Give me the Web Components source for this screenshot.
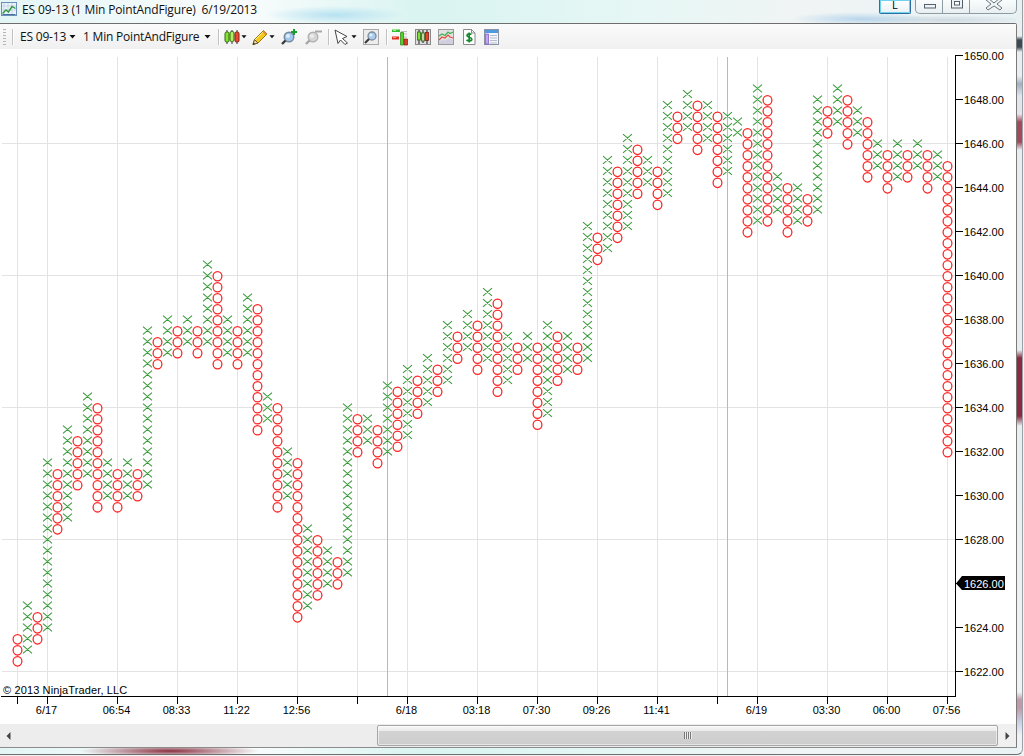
<!DOCTYPE html>
<html>
<head>
<meta charset="utf-8">
<title>ES 09-13 (1 Min PointAndFigure)</title>
<style>
    html, body { margin: 0; padding: 0; width: 1024px; height: 756px; overflow: hidden; background: #eef3f4; }
</style>
</head>
<body>
<nt-window>
    <nt-titlebar slot="title">ES 09-13 (1 Min PointAndFigure)&nbsp; 6/19/2013</nt-titlebar>
    <nt-toolbar>
        <tb-gripper></tb-gripper>
        <tb-sep style="margin-left:6px"></tb-sep>
        <tb-menu style="margin-left:7px;width:56px">ES 09-13</tb-menu>
        <tb-menu style="margin-left:7px;width:128px">1 Min PointAndFigure</tb-menu>
        <tb-sep style="margin-left:7px"></tb-sep>
        <tb-button icon="candles" arrow style="margin-left:5px"></tb-button>
        <tb-button icon="pencil" arrow style="margin-left:5px"></tb-button>
        <tb-button icon="zoomin" style="margin-left:6px"></tb-button>
        <tb-button icon="zoomout" style="margin-left:8px"></tb-button>
        <tb-sep style="margin-left:7px"></tb-sep>
        <tb-button icon="cursor" arrow style="margin-left:5px"></tb-button>
        <tb-button icon="finder" style="margin-left:6px"></tb-button>
        <tb-sep style="margin-left:7px"></tb-sep>
        <tb-button icon="orders" style="margin-left:5px"></tb-button>
        <tb-button icon="bars" style="margin-left:7px"></tb-button>
        <tb-button icon="lines" style="margin-left:7px"></tb-button>
        <tb-button icon="dollar" style="margin-left:7px"></tb-button>
        <tb-button icon="sheet" style="margin-left:7px"></tb-button>
    </nt-toolbar>
    <pf-chart></pf-chart>
    <nt-scrollbar></nt-scrollbar>
</nt-window>

<script>
"use strict";

class NtWindow extends HTMLElement {
    constructor() {
        super();
        this.attachShadow({ mode: 'open' }).innerHTML = `
            <style>
                :host { display: block; width: 1023px; height: 755px; }
                .frame {
                    box-sizing: border-box;
                    width: 100%;
                    height: 100%;
                    padding: 0 5px 6px 0;
                    display: flex;
                    flex-direction: column;
                    border-bottom: 1px solid #6f6f6f;
                    border-right: 1px solid #9aa0a4;
                    border-bottom-right-radius: 6px;
                    background:
                        linear-gradient(#e8f0f2 0, #e8f0f2 36px, #3a4a55 40px, #3a4a55 47px, #e8eef2 52px, #e8eef2 76px, #9fb0c0 84px, #dfe6ee 96px, #e8e4ea 114px, #a04a5c 122px, #a04a5c 142px, #e6eef0 150px, #e6eef0 350px, #8a2a40 358px, #8a2a40 416px, #e6f0f0 426px, #eef4f4 692px, #c09aa8 700px, #c09aa8 708px, #c8d0e8 722px, #eef2f6 735px) right top / 6px 100% no-repeat,
                        radial-gradient(90px 6px at 170px 751px, #8a3040, rgba(138,48,64,0)),
                        radial-gradient(70px 9px at 335px 15px, rgba(170,220,240,.8), rgba(170,220,240,0)),
                        radial-gradient(70px 7px at 860px 19px, rgba(150,195,230,.6), rgba(150,195,230,0)),
                        radial-gradient(90px 5px at 945px 20px, rgba(170,185,200,.45), rgba(170,185,200,0)),
                        linear-gradient(90deg, #e4f5f6 0, #f6fbfb 200px, #f8fcfc 250px, #d9f4f1 420px, #e6f7f5 640px, #f0f4f4 800px, #e9f3f6 1020px);
                }
                .client {
                    flex: 1;
                    display: flex;
                    flex-direction: column;
                    background: #fff;
                    border-top: 1px solid #6e6e6e;
                    border-right: 1px solid #7a7a7a;
                    border-bottom: 1px solid #8c8c8c;
                    border-top-right-radius: 2px;
                }
            </style>
            <div class="frame">
                <slot name="title"></slot>
                <div class="client"><slot></slot></div>
            </div>
        `;
    }
}
customElements.define('nt-window', NtWindow);

class NtTitlebar extends HTMLElement {
    constructor() {
        super();
        this.attachShadow({ mode: 'open' }).innerHTML = `
            <style>
                :host { display: flex; height: 23px; align-items: flex-start; font: 12px "Open Sans", sans-serif; color: #111; }
                .icon { width: 16px; height: 14px; margin: 2px 0 0 1px; flex: none; }
                .text { margin: 1px 0 0 5px; line-height: 17px; letter-spacing: -.15px; white-space: pre; flex: 1; text-shadow: 0 0 4px #fff; }
                .layout {
                    box-sizing: border-box; width: 32px; height: 14px; flex: none; margin-right: 4px; padding-top: 1px;
                    border: 1px solid #2a6f9f; border-top: 0; border-radius: 0 0 2px 2px;
                    background: linear-gradient(#fff, #e9f1f5);
                    box-shadow: inset 0 0 0 1px #6fd3ee;
                    font: 10px/10px "Liberation Sans", sans-serif; text-align: center; color: #000;
                }
                .caption {
                    box-sizing: border-box; width: 102px; height: 14px; flex: none; display: flex;
                    border: 1px solid #8d9ba3; border-top: 0; border-radius: 0 0 5px 5px;
                    background: linear-gradient(rgba(255,255,255,.75), rgba(232,238,240,.75));
                }
                .caption svg { display: block; border-right: 1px solid #8d9ba3; flex: none; }
                .caption svg:last-child { border-right: 0; flex: 1; }
            </style>
            <svg class="icon" viewBox="0 0 16 14">
                <rect x=".5" y=".5" width="15" height="13" fill="#eaf3fb" stroke="#6d8fb6"/>
                <path d="M3 1v12M7 1v12M11 1v12M1 4h14M1 8h14" stroke="#c6d5e6"/>
                <path d="M1.5 11.5 5 8l2.5 2L11 4.5l3.5 2" fill="none" stroke="#2f9a3a" stroke-width="1.4"/>
                <path d="M1.5 12.5h13" stroke="#4970a5"/>
            </svg>
            <span class="text"><slot></slot></span>
            <div class="layout">L</div>
            <div class="caption">
                <svg width="26" height="13"><rect x="8.5" y="4.5" width="11" height="3.5" fill="#eef3f5" stroke="#56606a"/></svg>
                <svg width="26" height="13"><rect x="8.5" y="-1.5" width="11" height="9.5" fill="#eef3f5" stroke="#56606a"/><rect x="11.5" y="1.5" width="5" height="3.5" fill="#fff" stroke="#56606a"/></svg>
                <svg width="48" height="13"><path d="M18 -2 24 3 30 -2 32 0 27 4 32 8 30 10 24 6 18 10 16 8 21 4 16 0Z" fill="#eef3f5" stroke="#6a747c"/></svg>
            </div>
        `;
    }
}
customElements.define('nt-titlebar', NtTitlebar);

class NtToolbar extends HTMLElement {
    constructor() {
        super();
        this.attachShadow({ mode: 'open' }).innerHTML = `
            <style>
                :host {
                    display: flex; align-items: center; flex: none; box-sizing: border-box;
                    height: 25px; padding-left: 3px;
                    background: linear-gradient(#fbfbfb, #f0f0f0);
                    font: 12px "Open Sans", sans-serif; color: #111;
                }
            </style>
            <slot></slot>
        `;
    }
}
customElements.define('nt-toolbar', NtToolbar);

class TbGripper extends HTMLElement {
    constructor() {
        super();
        this.attachShadow({ mode: 'open' }).innerHTML = `
            <style>
                :host {
                    display: block; width: 3px; height: 16px; flex: none;
                    background: repeating-linear-gradient(#b5b5b5 0 1px, #f4f4f4 1px 2px, transparent 2px 3px);
                }
            </style>
        `;
    }
}
customElements.define('tb-gripper', TbGripper);

class TbSep extends HTMLElement {
    constructor() {
        super();
        this.attachShadow({ mode: 'open' }).innerHTML = `
            <style>
                :host { display: block; width: 1px; height: 16px; flex: none; background: #c2c2c2; box-shadow: 1px 0 0 #fff; }
            </style>
        `;
    }
}
customElements.define('tb-sep', TbSep);

const ARROW = '<svg class="arrow" width="7" height="5" viewBox="0 0 7 5"><path d="M.5 1h6L3.500 4.500z" fill="#111"/></svg>';

class TbMenu extends HTMLElement {
    constructor() {
        super();
        this.attachShadow({ mode: 'open' }).innerHTML = `
            <style>
                :host { display: flex; align-items: center; justify-content: space-between; flex: none; white-space: nowrap; letter-spacing: -.2px; line-height: 17px; }
                .arrow { display: block; }
            </style>
            <span><slot></slot></span>${ARROW}
        `;
    }
}
customElements.define('tb-menu', TbMenu);

const ICONS = {
    candles: `<path d="M3 1v14M8 1v14M13 1v14" stroke="#333"/>
        <rect x="1" y="3" width="4" height="10" rx="1.500" fill="#86e02c" stroke="#2c6a18"/>
        <rect x="6" y="2.500" width="4" height="10" rx="1.500" fill="#b4ec5c" stroke="#2c6a18"/>
        <rect x="11" y="3" width="4" height="10" rx="1.500" fill="#ee4a30" stroke="#7c2014"/>`,
    pencil: `<path d="M1 15.500 2.500 10.500 11.500 1.500 15 5 6 14z" fill="#f4c81c" stroke="#9a7a10"/>
        <path d="M3 11 12 2" stroke="#fff28a"/>
        <path d="M1 15.500 2.500 10.500 6 14z" fill="#e8d6a8" stroke="#6a5a30"/>
        <path d="M.8 15.800 1.500 13.500 3 15z" fill="#222"/>
        <path d="M11.500 1.500 15 5 13.800 6.200 10.300 2.700z" fill="#e88a3a"/>`,
    zoomin: `<circle cx="8" cy="8" r="4.800" fill="#9fc6ee" stroke="#7a8a9a" stroke-width="1.400"/>
        <circle cx="7" cy="7" r="2" fill="#dcecfb"/>
        <path d="M4.500 11.500 1 15" stroke="#3a3a3a" stroke-width="2.400"/>
        <path d="M13 0v6M10 3h6" stroke="#15a02a" stroke-width="2"/>`,
    zoomout: `<circle cx="8" cy="8" r="4.800" fill="#d6d6d6" stroke="#b2b2b2" stroke-width="1.400"/>
        <circle cx="7" cy="7" r="2" fill="#ececec"/>
        <path d="M4.500 11.500 1 15" stroke="#a5a5a5" stroke-width="2.400"/>
        <path d="M10 2.500h7" stroke="#a9a9a9" stroke-width="2"/>`,
    cursor: `<path d="M1 1 13 7.500 8.500 9.500 13.500 14 11 15.500 6.500 11 4 14.500z" fill="#fff" stroke="#444" stroke-linejoin="round"/>`,
    finder: `<rect x=".5" y=".5" width="15" height="15" fill="#ececec" stroke="#a8a8a8"/>
        <circle cx="9" cy="7" r="4" fill="#a9cdf0" stroke="#7d8c9c" stroke-width="1.300"/>
        <circle cx="8" cy="6" r="1.600" fill="#e0eefb"/>
        <path d="M6 10 2 14" stroke="#3a3a3a" stroke-width="2.200"/>`,
    orders: `<path d="M9 2.500h6M10 5h5M10 8h5M11 11h4M11 14h4" stroke="#bdbdbd"/>
        <path d="M0 .5h8v2.500H0z" fill="#2fbf2f"/><path d="M1 .5h3V2H1z" fill="#a4ee80"/>
        <path d="M0 7.500h7v3H0z" fill="#e33020"/><path d="M1 8h3v1H1z" fill="#ff9a8a"/>
        <path d="M8.500 3.500h3V16h-3z" fill="#56d028" stroke="#2a8018" stroke-width=".7"/>
        <path d="M12 10h3.500v6H12z" fill="#d84028" stroke="#7a2014" stroke-width=".7"/>`,
    bars: `<rect x=".5" y=".5" width="15" height="15" fill="#dcdcdc" stroke="#8a8a8a"/>
        <path d="M4 1v14M8 1v13M12 1v14" stroke="#222"/>
        <rect x="2.500" y="3" width="3" height="8" fill="#7ce030" stroke="#2a6a18" stroke-width=".8"/>
        <rect x="6.500" y="4" width="3" height="8" fill="#c8d6a0" stroke="#3a5a20" stroke-width=".8"/>
        <rect x="10.500" y="3.500" width="3" height="8" fill="#ea4428" stroke="#7c2014" stroke-width=".8"/>`,
    lines: `<rect x=".5" y=".5" width="15" height="15" fill="#e2e2e2" stroke="#9a9a9a"/>
        <path d="M1 7 4 5l3 1.500L10 3l2 1.500L15 3" fill="none" stroke="#38b050" stroke-width="1.200"/>
        <path d="M1 11l3-3 3 1 3-3 2 2 3 1" fill="none" stroke="#e84a3a" stroke-width="1.100"/>
        <path d="M1 12.500l3-1.500 3 .5 4-2 4 1.500V15H1z" fill="#cfcfe0"/>`,
    dollar: `<path d="M2.500.5h8L14 4v11.500H2.500z" fill="#fff" stroke="#8a8a8a"/>
        <path d="M10.500.5V4H14" fill="none" stroke="#8a8a8a"/>
        <path d="M10.500 5.500C9.500 4.500 6 4.500 6 6.500S10.800 8 10.800 10.200 7 12.200 5.500 11M8.200 3.500v10" fill="none" stroke="#18882c" stroke-width="1.700"/>`,
    sheet: `<rect x=".5" y=".5" width="14" height="15" fill="#f4f6fa" stroke="#8a92a8"/>
        <rect x="1" y="1" width="13" height="3" fill="#4d9bdd"/>
        <rect x="1.500" y="5" width="3" height="10" fill="#c4a6ee" stroke="#7a52c0" stroke-width=".7"/>
        <path d="M6 6.500h7M6 9h7M6 11.500h7M6 14h7" stroke="#b5bccb"/>`
};

class TbButton extends HTMLElement {
    constructor() {
        super();
        this.attachShadow({ mode: 'open' });
    }
    connectedCallback() {
        const hasArrow = this.hasAttribute('arrow');
        this.shadowRoot.innerHTML = `
            <style>
                :host { display: flex; align-items: center; flex: none; height: 16px; }
                svg { display: block; overflow: visible; }
                .arrow { margin: 0 0 0 1px; }
            </style>
            <svg width="16" height="16" viewBox="0 0 16 16">${ICONS[this.getAttribute('icon')]}</svg>
            ${hasArrow ? ARROW.replace('width="7"', 'width="6"') : ''}
        `;
    }
}
customElements.define('tb-button', TbButton);

// one entry per column, x = 17 + 10 * index: type, high, low
const COLUMNS = `O1623.5-1622.5 X1625-1623 O1624.5-1623.5 X1631.5-1624 O1631-1628.5 X1633-1629 O1632.5-1630.5
X1634.5-1631 O1634-1629.5 X1631.5-1630 O1631-1629.5 X1631.5-1630 O1631-1630 X1637.5-1630.5 O1637-1636
X1638-1636.5 O1637.5-1636.5 X1638-1637 O1637.5-1636.5 X1640.5-1637 O1640-1636 X1638-1636.5 O1637.5-1636
X1639-1636.5 O1638.5-1633 X1634.5-1633.5 O1634-1629.5 X1632-1630 O1631.5-1624.5 X1628.5-1625 O1628-1625.5
X1627.5-1626 O1627-1626 X1634-1626.5 O1633.5-1632 X1633.5-1632.5 O1633-1631.5 X1635-1632 O1634.75-1632.25
X1635.75-1632.75 O1635.25-1633.75 X1636.25-1634.25 O1635.75-1634.75 X1637.75-1635.25 O1637.25-1636.25
X1638.25-1636.75 O1637.75-1635.75 X1639.25-1636.25 O1638.75-1634.75 X1637.25-1635.25 O1636.75-1635.75
X1637.25-1636.25 O1636.75-1633.25 X1637.75-1633.75 O1637.25-1635.25 X1637.25-1635.75 O1636.75-1635.75
X1642.25-1636.25 O1641.75-1640.75 X1645.25-1641.25 O1644.75-1641.75 X1646.25-1642.25 O1645.75-1643.75
X1645.25-1644.25 O1644.75-1643.25 X1647.75-1643.75 O1647.25-1646.25 X1648.25-1646.75 O1647.75-1645.75
X1647.75-1646.25 O1647.25-1644.25 X1647.25-1644.75 X1647-1646.5 O1646.5-1642 X1648.5-1642.5 O1648-1642.5
X1644.5-1643 O1644-1642 X1644-1642.5 O1643.5-1642.5 X1648-1643 O1647.5-1646.5 X1648.5-1647 O1648-1646
X1647.5-1646.5 O1647-1644.5 X1646-1645 O1645.5-1644 X1646-1644.5 O1645.5-1644.5 X1646-1645 O1645.5-1644
X1645.5-1644.5 O1645-1632`.split(/\s+/);

const GRID_X = [17, 47, 117, 177, 237, 297, 357, 407, 477, 537, 597, 657, 717, 757, 827, 887, 947];
const SESSION_X = [387, 727];
const TIME_LABELS = { 47: '6/17', 117: '06:54', 177: '08:33', 237: '11:22', 297: '12:56', 407: '6/18', 477: '03:18',
    537: '07:30', 597: '09:26', 657: '11:41', 757: '6/19', 827: '03:30', 887: '06:00', 947: '07:56' };

const priceY = (p) => 671.5 - (p - 1622) * 22;

class PfChart extends HTMLElement {
    constructor() {
        super();
        this.attachShadow({ mode: 'open' });
    }
    connectedCallback() {
        this.render();
    }
    render() {
        let grid = '';
        for (const x of GRID_X) {
            grid += `<rect x="${x}" y="57" width="1" height="639" fill="#e3e3e3"/>`;
        }
        for (const p of [1622, 1628, 1634, 1640, 1646]) {
            grid += `<rect x="2" y="${priceY(p) - .5}" width="953" height="1" fill="#e3e3e3"/>`;
        }
        for (const x of SESSION_X) {
            grid += `<rect x="${x}" y="57" width="1" height="639" fill="#b9b9b9"/>`;
        }

        let crosses = '';
        let rings = '';
        COLUMNS.forEach((col, i) => {
            const x = 17.5 + i * 10;
            const [high, low] = col.slice(1).split('-').map(Number);
            for (let p = high; p >= low; p -= .5) {
                const y = priceY(p);
                if (col[0] === 'X') {
                    crosses += `M${x - 4.5} ${y - 3.8}L${x + 4.5} ${y + 3.8}M${x - 4.5} ${y + 3.8}L${x + 4.5} ${y - 3.8}`;
                } else {
                    rings += `<ellipse cx="${x}" cy="${y + .8}" rx="4.4" ry="4.7"/>`;
                }
            }
        });

        let ticks = '';
        let labels = '';
        for (const x of GRID_X.slice(1).concat(17)) {
            ticks += `<rect x="${x}" y="696" width="1" height="8"/>`;
            if (TIME_LABELS[x]) {
                labels += `<text x="${x - .5}" y="714" text-anchor="middle">${TIME_LABELS[x]}</text>`;
            }
        }
        for (let p = 1622; p <= 1650; p += 2) {
            const y = priceY(p) - .5;
            ticks += `<rect x="956" y="${y}" width="7" height="1"/>`;
            if (p !== 1626) {
                labels += `<text x="964" y="${y + 5}">${p}.00</text>`;
            }
        }

        this.shadowRoot.innerHTML = `
            <style>
                :host { display: block; flex: none; height: 675px; }
                svg { display: block; font: 11px "Liberation Sans", sans-serif; fill: #000; }
            </style>
            <svg width="1016" height="675" viewBox="0 49 1016 675">
                <rect x="0" y="49" width="1016" height="675" fill="#fff"/>
                ${grid}
                <path d="${crosses}" fill="none" stroke="#389a38" stroke-width="1.050"/>
                <g fill="#fff" stroke="#ff2020" stroke-width="1.250">${rings}</g>
                <rect x="1" y="696" width="955" height="1"/>
                <rect x="955" y="55" width="1" height="642"/>
                ${ticks}
                ${labels}
                <text x="3" y="694" letter-spacing=".13">© 2013 NinjaTrader, LLC</text>
                <path d="M956 583.500 962 576H1005V590H962z"/>
                <text x="964" y="588" fill="#fff">1626.00</text>
            </svg>
        `;
    }
}
customElements.define('pf-chart', PfChart);

class NtScrollbar extends HTMLElement {
    constructor() {
        super();
        this.attachShadow({ mode: 'open' }).innerHTML = `
            <style>
                :host { display: flex; flex: none; height: 23px; background: #ededed; }
                .left, .right { display: flex; align-items: center; flex: none; }
                .left { width: 377px; padding-left: 6px; box-sizing: border-box; }
                .right { flex: 1; justify-content: center; background: #f0f0f0; }
                .thumb {
                    box-sizing: border-box; width: 621px; margin: 1px 0; flex: none;
                    display: flex; align-items: center; justify-content: center;
                    border: 1px solid #a6a6a6; border-radius: 2px;
                    background: linear-gradient(#f6f6f6, #ebebeb 24%, #d2d2d2 28%, #cecece 90%, #c4c4c4);
                    box-shadow: inset 0 0 0 1px rgba(255,255,255,.55);
                }
                .grip { width: 8px; height: 7px; background: repeating-linear-gradient(90deg, #777 0 1px, #eee 1px 2px); margin-top: -1px; }
            </style>
            <div class="left"><svg width="5" height="8"><path d="M4.500 0V8L.5 4z" fill="#444"/></svg></div>
            <div class="thumb"><div class="grip"></div></div>
            <div class="right"><svg width="5" height="8"><path d="M.5 0V8L4.500 4z" fill="#444"/></svg></div>
        `;
    }
}
customElements.define('nt-scrollbar', NtScrollbar);
</script>
</body>
</html>
